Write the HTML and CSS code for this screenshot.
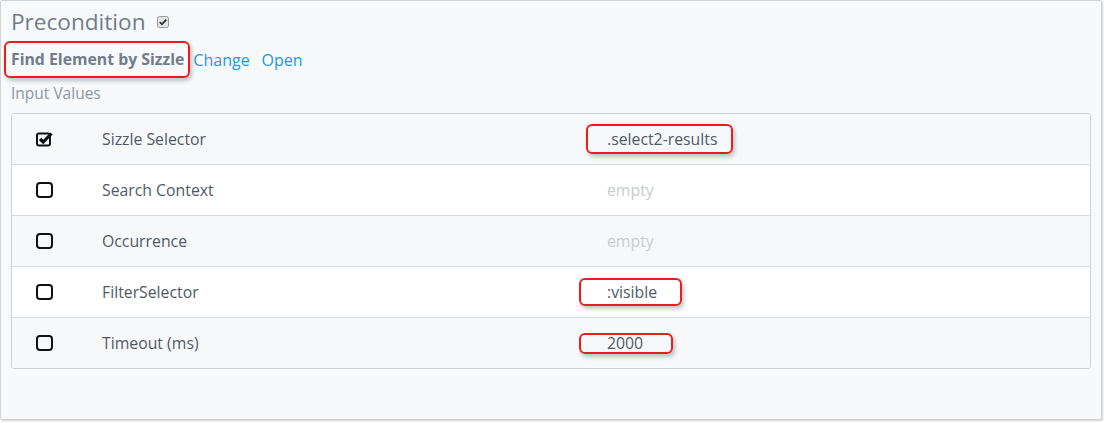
FILE: index.html
```html
<!DOCTYPE html>
<html>
<head>
<meta charset="utf-8">
<link rel="stylesheet" href="styles.css">
</head>
<body>
<div class="frame">
  <div class="title-row">
    <h1 class="title">Precondition</h1>
    <span class="mini-check">
      <svg width="12" height="12" viewBox="0 0 12 12"><rect x="0.5" y="0.5" width="11" height="11" rx="2" fill="#e4e4e4" stroke="#9a9a9a"/><path d="M2.8 6.2 L5 8.3 L9.3 3.6" fill="none" stroke="#333" stroke-width="1.8"/></svg>
    </span>
  </div>
  <div class="step-row">
    <span class="mark step-name">Find Element by Sizzle</span>
    <a class="link">Change</a>
    <a class="link">Open</a>
  </div>
  <div class="section-label">Input Values</div>
  <div class="table">
    <div class="row odd">
      <div class="cell-check">
        <svg width="18" height="16" viewBox="0 0 18 16"><rect x="1" y="2.5" width="13" height="12" rx="2" fill="none" stroke="#111" stroke-width="2"/><path d="M4 8 L7.2 11 L15.5 2.5" fill="none" stroke="#111" stroke-width="3.2" stroke-linejoin="miter"/></svg>
      </div>
      <div class="cell-label">Sizzle Selector</div>
      <div class="cell-value"><span class="mark val v1">.select2-results</span></div>
    </div>
    <div class="row">
      <div class="cell-check">
        <svg width="18" height="16" viewBox="0 0 18 16"><rect x="1" y="1" width="15" height="14" rx="3" fill="none" stroke="#111" stroke-width="2"/></svg>
      </div>
      <div class="cell-label">Search Context</div>
      <div class="cell-value empty">empty</div>
    </div>
    <div class="row odd">
      <div class="cell-check">
        <svg width="18" height="16" viewBox="0 0 18 16"><rect x="1" y="1" width="15" height="14" rx="3" fill="none" stroke="#111" stroke-width="2"/></svg>
      </div>
      <div class="cell-label">Occurrence</div>
      <div class="cell-value empty">empty</div>
    </div>
    <div class="row">
      <div class="cell-check">
        <svg width="18" height="16" viewBox="0 0 18 16"><rect x="1" y="1" width="15" height="14" rx="3" fill="none" stroke="#111" stroke-width="2"/></svg>
      </div>
      <div class="cell-label">FilterSelector</div>
      <div class="cell-value"><span class="mark val v4">:visible</span></div>
    </div>
    <div class="row odd">
      <div class="cell-check">
        <svg width="18" height="16" viewBox="0 0 18 16"><rect x="1" y="1" width="15" height="14" rx="3" fill="none" stroke="#111" stroke-width="2"/></svg>
      </div>
      <div class="cell-label">Timeout (ms)</div>
      <div class="cell-value"><span class="mark val v5">2000</span></div>
    </div>
  </div>
</div>
</body>
</html>
```
FILE: styles.css
```css
html, body {
  margin: 0;
  padding: 0;
  background: #ffffff;
}
body {
  font-family: "Open Sans", "Noto Sans", sans-serif;
  width: 1104px;
  height: 423px;
  overflow: hidden;
}
.frame {
  box-sizing: border-box;
  width: 1102px;
  height: 420px;
  background: #f8f9fb;
  border: 1px solid #d3d3d3;
  border-radius: 2px;
  box-shadow: 1px 1px 2px rgba(0,0,0,0.18);
  padding: 0 10px 0 10px;
}
.title-row {
  display: flex;
  align-items: center;
  height: 42px;
  gap: 11px;
}
.title {
  margin: 0;
  font-weight: 400;
  font-size: 22.6px;
  color: #6f7d8c;
  line-height: 1;
}
.mini-check {
  display: flex;
}
.mini-check svg { display: block; }
.step-row {
  display: flex;
  align-items: center;
  height: 33px;
}
.mark {
  border: 2px solid #ec1c1c;
  border-radius: 6px;
  box-shadow: 2px 3px 4px rgba(0,0,0,0.22);
}
.step-name {
  font-weight: 700;
  font-size: 15.8px;
  color: #6f7d8c;
  padding: 6px 4px 7px 5px;
  margin-left: -7px;
  line-height: 20px;
}
.link {
  font-size: 16px;
  color: #1b9ad6;
  margin-left: 3px;
  margin-right: 9px;
}
.section-label {
  font-size: 15.5px;
  color: #8a97a5;
  height: 37px;
  line-height: 34px;
}
.table {
  border: 1px solid #cfd3d7;
  border-radius: 3px;
  overflow: hidden;
  width: 1078px;
}
.row {
  display: grid;
  grid-template-columns: 90px 505px 1fr;
  align-items: center;
  height: 50px;
  border-top: 1px solid #d9dcdf;
  background: #ffffff;
  font-size: 15.8px;
  color: #4f5a66;
}
.row:first-child { border-top: none; }
.row.odd { background: #f7f8fa; }
.cell-check {
  padding-left: 24px;
  display: flex;
}
.cell-check svg { display: block; }
.cell-value.empty { color: #c9cccf; }
.val {
  display: inline-block;
  line-height: 20px;
}
.v1 { padding: 3px 14px 3px 19px; margin-left: -21px; }
.v4 { padding: 2px 23px 2px 26px; margin-left: -28px; }
.v5 { padding: 0 28px 0 26px; margin-left: -28px; line-height: 17px; margin-top: -3px; }
```
